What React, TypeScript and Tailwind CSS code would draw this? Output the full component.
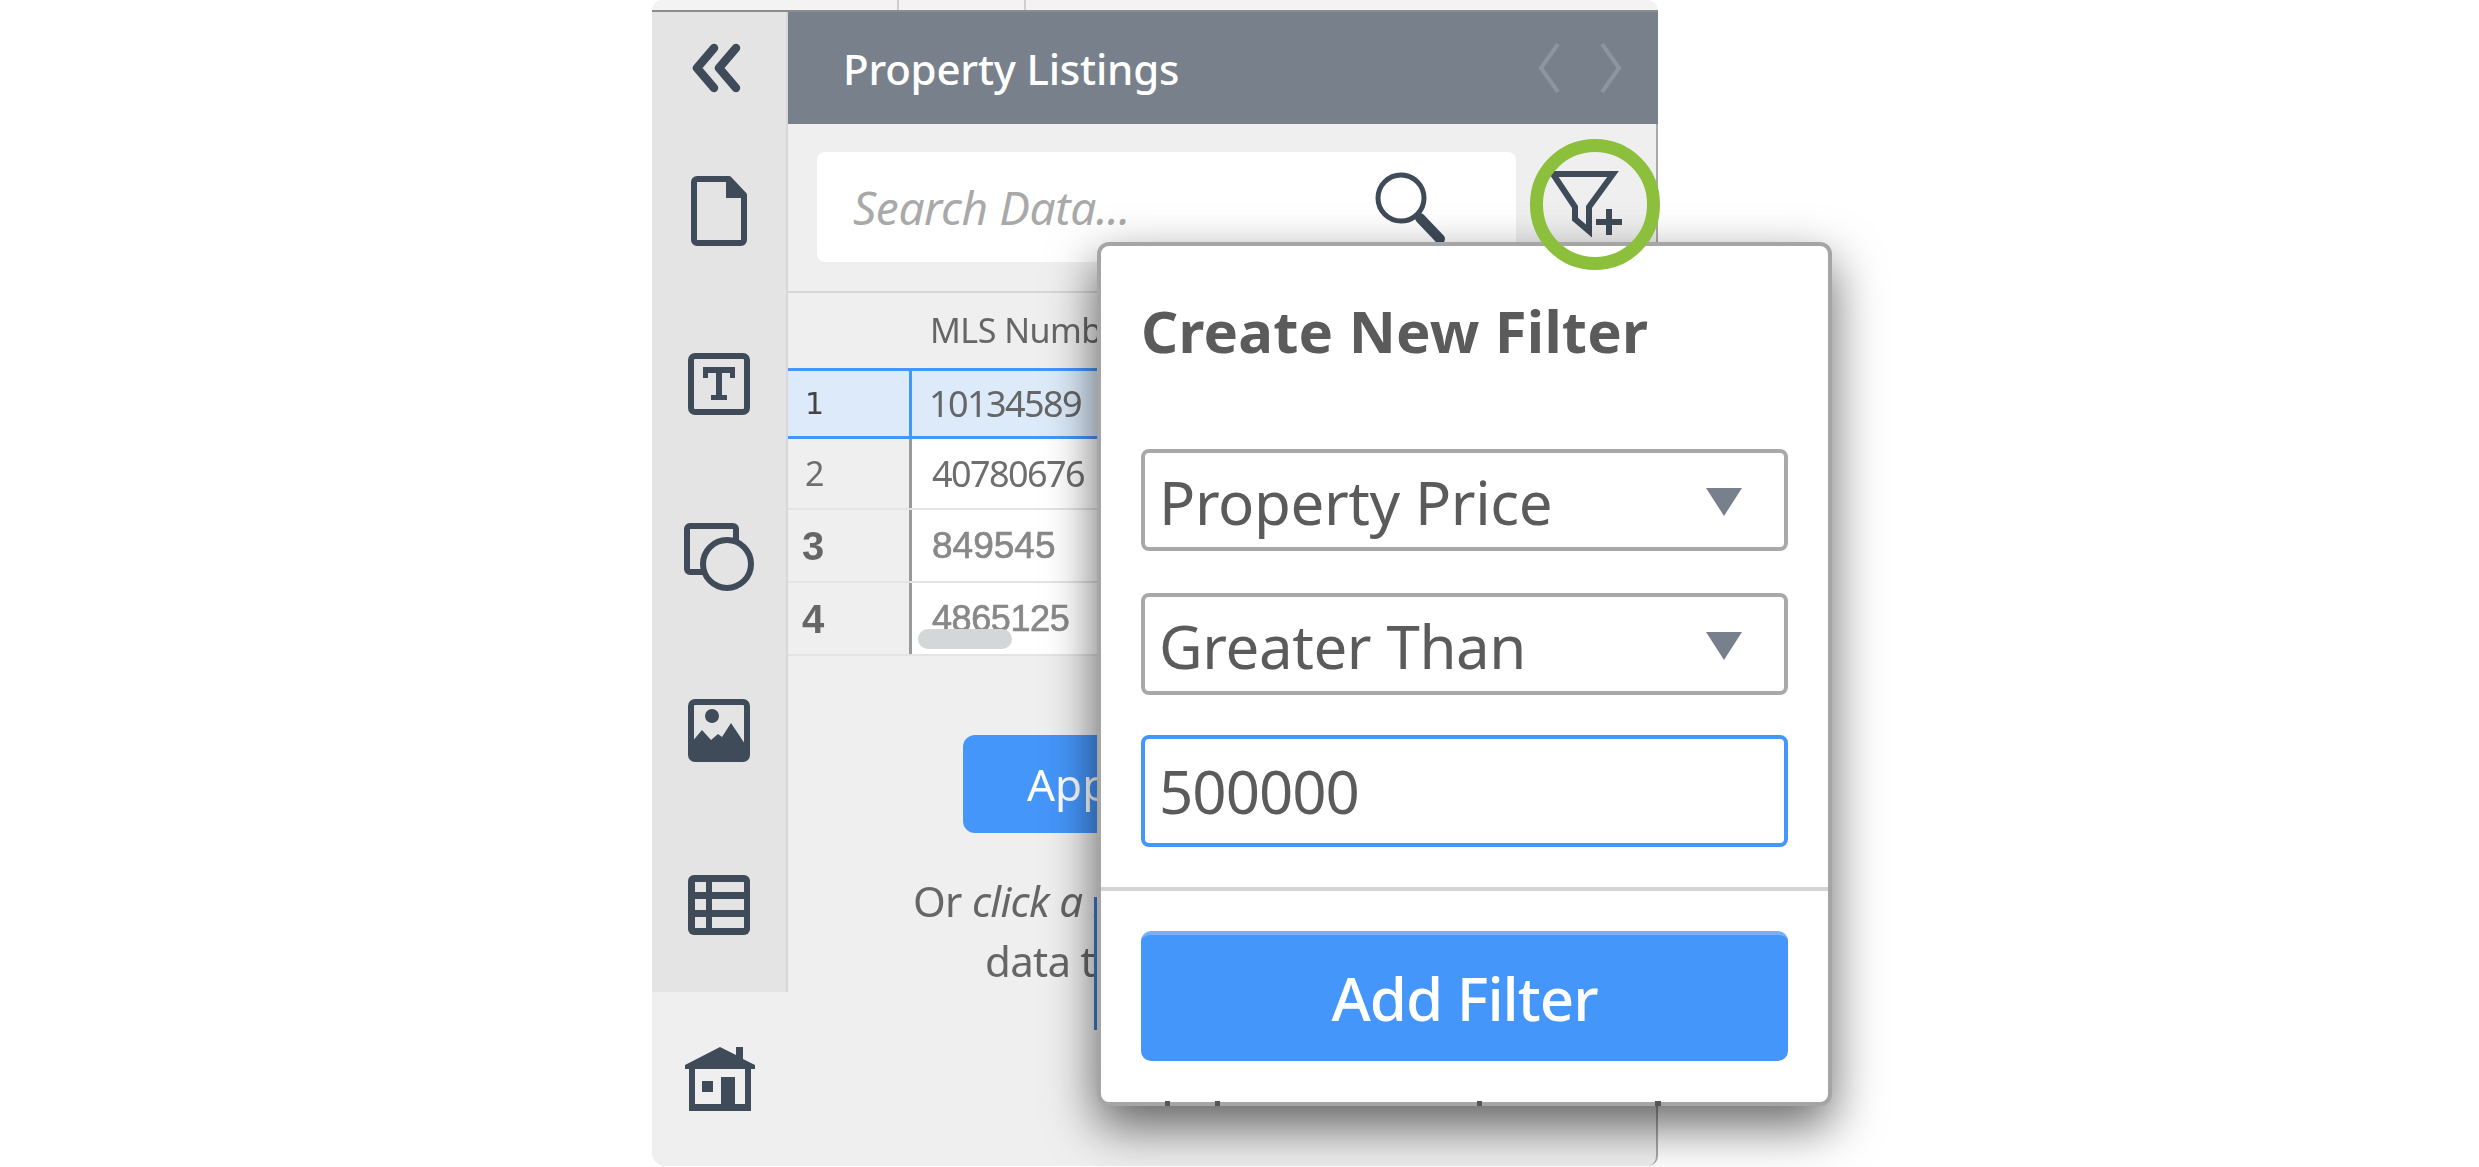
function Chevrons() {
  return (
    <svg width="50" height="50" viewBox="0 0 50 50" fill="none" stroke="#3f4b58" strokeWidth="8.5" strokeLinecap="round" strokeLinejoin="round">
      <path d="M22 5 5 25l17 20" />
      <path d="M44 5 27 25l17 20" />
    </svg>
  );
}

function DocIcon() {
  return (
    <svg width="56" height="70" viewBox="0 0 56 70">
      <path d="M6 3h32l15 16v45a3 3 0 0 1-3 3H6a3 3 0 0 1-3-3V6a3 3 0 0 1 3-3z" fill="none" stroke="#3f4b58" strokeWidth="6" strokeLinejoin="round" />
      <path d="M35 3h4l15 16v3H35z" fill="#3f4b58" />
    </svg>
  );
}

function TextIcon() {
  return (
    <svg width="62" height="62" viewBox="0 0 62 62">
      <rect x="3" y="3" width="56" height="56" rx="4" fill="none" stroke="#3f4b58" strokeWidth="6" />
      <path d="M15 14h32v11h-5v-5H34v22h5v5H23v-5h5V20h-8v5h-5z" fill="#3f4b58" />
    </svg>
  );
}

function ShapesIcon() {
  return (
    <svg width="70" height="70" viewBox="0 0 70 70" fill="none" stroke="#3f4b58" strokeWidth="6">
      <path d="M22 49H6a3 3 0 0 1-3-3V6a3 3 0 0 1 3-3h43a3 3 0 0 1 3 3v14" strokeLinejoin="round" />
      <circle cx="43" cy="41" r="24" />
    </svg>
  );
}

function ImageIcon() {
  return (
    <svg width="62" height="63" viewBox="0 0 62 63">
      <rect x="3" y="3" width="56" height="57" rx="4" fill="none" stroke="#3f4b58" strokeWidth="6" />
      <circle cx="24" cy="17" r="7" fill="#3f4b58" />
      <path d="M3 44 14 31l9 10 7-6 4 3 9-14 16 24v12H3z" fill="#3f4b58" />
    </svg>
  );
}

function TableIcon() {
  return (
    <svg width="62" height="60" viewBox="0 0 62 60">
      <rect x="0" y="0" width="62" height="60" rx="6" fill="#3f4b58" />
      <rect x="7" y="7" width="11" height="10" fill="#e4e4e4" />
      <rect x="7" y="24" width="11" height="11" fill="#e4e4e4" />
      <rect x="7" y="42" width="11" height="11" fill="#e4e4e4" />
      <rect x="24" y="7" width="32" height="10" fill="#e4e4e4" />
      <rect x="24" y="24" width="32" height="11" fill="#e4e4e4" />
      <rect x="24" y="42" width="32" height="11" fill="#e4e4e4" />
    </svg>
  );
}

function HomeIcon() {
  return (
    <svg width="70" height="64" viewBox="0 0 70 64">
      <path d="M0 18 35 0l16 8V0h7v12l12 6v4H0z" fill="#3f4b58" />
      <path d="M4 20h6v37h26V30h14v27h10V20h6v44H4z" fill="#3f4b58" />
      <rect x="17" y="34" width="11" height="11" fill="#3f4b58" />
    </svg>
  );
}

function SearchIcon() {
  return (
    <svg width="72" height="72" viewBox="0 0 72 72" fill="none" stroke="#3f4b58">
      <circle cx="27" cy="27" r="23" strokeWidth="5" />
      <path d="M46 47 66 68" strokeWidth="10" strokeLinecap="round" />
    </svg>
  );
}

function FunnelPlus() {
  return (
    <svg width="76" height="68" viewBox="0 0 76 68" fill="none" stroke="#3f4b58">
      <path d="M4 3h60L40 36v24L26 48V36z" strokeWidth="6" strokeLinejoin="miter" />
      <path d="M60 38v26M47 51h26" strokeWidth="6" />
    </svg>
  );
}

function Caret() {
  return <div className="h-0 w-0 border-x-[18px] border-t-[28px] border-x-transparent border-t-[#78818b]" />;
}

const selects = ["Property Price", "Greater Than"];

function SideItem({ h, children }: { h: string; children: React.ReactNode }) {
  return <div className={`flex items-center justify-center ${h}`}>{children}</div>;
}

export default function App() {
  return (
    <div className="h-[1167px] overflow-hidden bg-white pl-[652px] font-['Noto_Sans',sans-serif]">
      <div className="relative h-[1167px] w-[1006px]">
        <div className="blur-[0.6px]">
          {/* strip of the sheet behind the panel */}
          <div className="flex h-[10px] rounded-t-[14px] bg-[#f3f3f3] pl-[245px]">
            <div className="h-full w-[129px] border-x-2 border-[#cfcfcf]" />
          </div>
          <div className="flex h-[1156px] border-t-2 border-[#8c8c8c]">
            <div className="flex w-[136px] flex-col rounded-bl-[14px] bg-[#e4e4e4]">
              <div className="flex flex-1 flex-col border-r-2 border-[#d8d8d8]">
                <SideItem h="h-[112px] pr-[4px]"><Chevrons /></SideItem>
                <SideItem h="h-[173px]"><DocIcon /></SideItem>
                <SideItem h="h-[174px]"><TextIcon /></SideItem>
                <SideItem h="h-[173px]"><ShapesIcon /></SideItem>
                <SideItem h="h-[173px]"><ImageIcon /></SideItem>
                <SideItem h="h-[175px]"><TableIcon /></SideItem>
              </div>
              <SideItem h="h-[174px] bg-[#efefef] rounded-bl-[14px]"><HomeIcon /></SideItem>
            </div>

            <div className="flex flex-1 flex-col rounded-br-[10px] border-r-2 border-[#a9a9a9] bg-[#efefef]">
              <div className="flex h-[112px] items-center justify-between bg-[#78818b] pr-[36px] pl-[55px] -mr-[2px]">
                <span className="text-[42px] font-medium tracking-[-0.2px] text-white">Property Listings</span>
                <div className="flex gap-[40px]">
                  <svg width="22" height="52" viewBox="0 0 22 52" fill="none" stroke="#8d96a0" strokeWidth="4"><path d="M20 2 3 26l17 24" /></svg>
                  <svg width="22" height="52" viewBox="0 0 22 52" fill="none" stroke="#8d96a0" strokeWidth="4"><path d="M2 2l17 24L2 50" /></svg>
                </div>
              </div>

              <div className="flex h-[169px] items-start border-b-2 border-[#d6d6d6] pt-[28px] pl-[29px]">
                <div className="flex h-[110px] w-[699px] items-center justify-between rounded-[8px] bg-white pr-[70px] pl-[36px]">
                  <span className="text-[46px] tracking-[-0.4px] text-[#a9a9a9] italic">Search Data...</span>
                  <SearchIcon />
                </div>
                <div className="ml-[33px] pt-[19px]"><FunnelPlus /></div>
              </div>

              <div className="flex h-[75px] items-center pl-[142px] text-[34px] tracking-[-0.5px] whitespace-nowrap text-[#666]">MLS Number</div>
              <div className="flex h-[71px] border-y-[3px] border-[#4596fb] bg-[#dceaf9] text-[#666]">
                <div className="flex w-[121px] items-center pl-[17px] font-['DejaVu_Sans',sans-serif] text-[30px] text-[#444]">1</div>
                <div className="flex flex-1 items-center border-l-[3px] border-[#4596fb] pl-[17px] text-[36px] tracking-[-1.6px]">10134589</div>
              </div>
              <div className="flex h-[71px] border-b-2 border-[#e4e4e4] text-[#6e6e6e]">
                <div className="flex w-[121px] items-center pl-[17px] text-[34px]">2</div>
                <div className="flex flex-1 items-center border-l-[3px] border-[#9a9a9a] bg-white pl-[20px] text-[36px] tracking-[-1.6px]">40780676</div>
              </div>
              <div className="flex h-[73px] border-b-2 border-[#e4e4e4] font-['Liberation_Sans',sans-serif]">
                <div className="flex w-[121px] items-center pl-[14px] text-[40px] font-bold text-[#666]">3</div>
                <div className="flex flex-1 items-center border-l-[3px] border-[#9a9a9a] bg-white pl-[20px] text-[37px] text-[#888] [-webkit-text-stroke:0.7px_#888]">849545</div>
              </div>
              <div className="flex h-[73px] border-b-2 border-[#e4e4e4] font-['Liberation_Sans',sans-serif]">
                <div className="flex w-[121px] items-center pl-[14px] text-[40px] font-bold text-[#666]">4</div>
                <div className="relative flex flex-1 items-center border-l-[3px] border-[#9a9a9a] bg-white pl-[20px] text-[36px] tracking-[-0.4px] text-[#888] [-webkit-text-stroke:0.7px_#888]">
                  4865125
                  <div className="absolute top-[46px] left-[6px] h-[20px] w-[94px] rounded-full bg-[#d5d6d8]" />
                </div>
              </div>

              <div className="mt-[79px] ml-[175px] flex h-[98px] w-[518px] items-center rounded-[12px] bg-[#4596fb] pl-[64px] text-[44px] text-white">Apply Data</div>
              <div className="mt-[38px] pl-[125px] text-[42px] leading-[60px] tracking-[-0.7px] whitespace-nowrap text-[#666]">
                Or <i>click a row</i>
              </div>
              <div className="pl-[197px] text-[42px] leading-[60px] tracking-[-0.7px] text-[#666]">data to</div>
            </div>
          </div>
        </div>

        {/* bits of the sheet that show past the popup edge */}
        <div className="absolute top-[897px] left-[442px] h-[133px] w-[6px] bg-[#3f7fd0]" />

        <div className="absolute top-[242px] left-[445px] flex h-[864px] w-[735px] flex-col rounded-[12px] border-4 border-[#a5a5a5] bg-white px-[40px] text-[#5b5b5b] shadow-[0_20px_50px_rgba(0,0,0,0.6)]">
          <div className="flex h-[168px] items-center text-[58px] font-bold tracking-[0.2px]">Create New Filter</div>
          <div className="mt-[35px] flex flex-col gap-[42px]">
            {selects.map((label) => (
              <div key={label} className="flex h-[102px] items-center justify-between rounded-[8px] border-[4px] border-[#a8a8a8] pt-[4px] pr-[42px] pl-[14px] text-[60px] tracking-[-0.4px]">
                {label}
                <Caret />
              </div>
            ))}
          </div>
          <div className="mt-[40px] flex h-[112px] items-center rounded-[8px] border-[4px] border-[#4596fb] pl-[14px] text-[60px] tracking-[-1px]">500000</div>
          <div className="-mx-[40px] mt-[40px] h-[4px] bg-[#d4d4d4]" />
          <div className="mt-[40px] flex h-[130px] items-center justify-center rounded-[10px] border-t-4 border-[#74b0fc] bg-[#4596fb] text-[60px] font-medium tracking-[-1px] text-white">Add Filter</div>

          <div className="absolute -bottom-[4px] left-[64px] h-[5px] w-[5px] bg-[#555]" />
          <div className="absolute -bottom-[4px] left-[114px] h-[5px] w-[5px] bg-[#555]" />
          <div className="absolute -bottom-[4px] left-[376px] h-[5px] w-[5px] bg-[#555]" />
          <div className="absolute -bottom-[4px] left-[554px] h-[5px] w-[6px] bg-[#555]" />
        </div>

        <div className="absolute top-[139px] left-[878px] h-[131px] w-[130px] rounded-full border-[13px] border-[#8bbf3c]" />
      </div>
    </div>
  );
}
